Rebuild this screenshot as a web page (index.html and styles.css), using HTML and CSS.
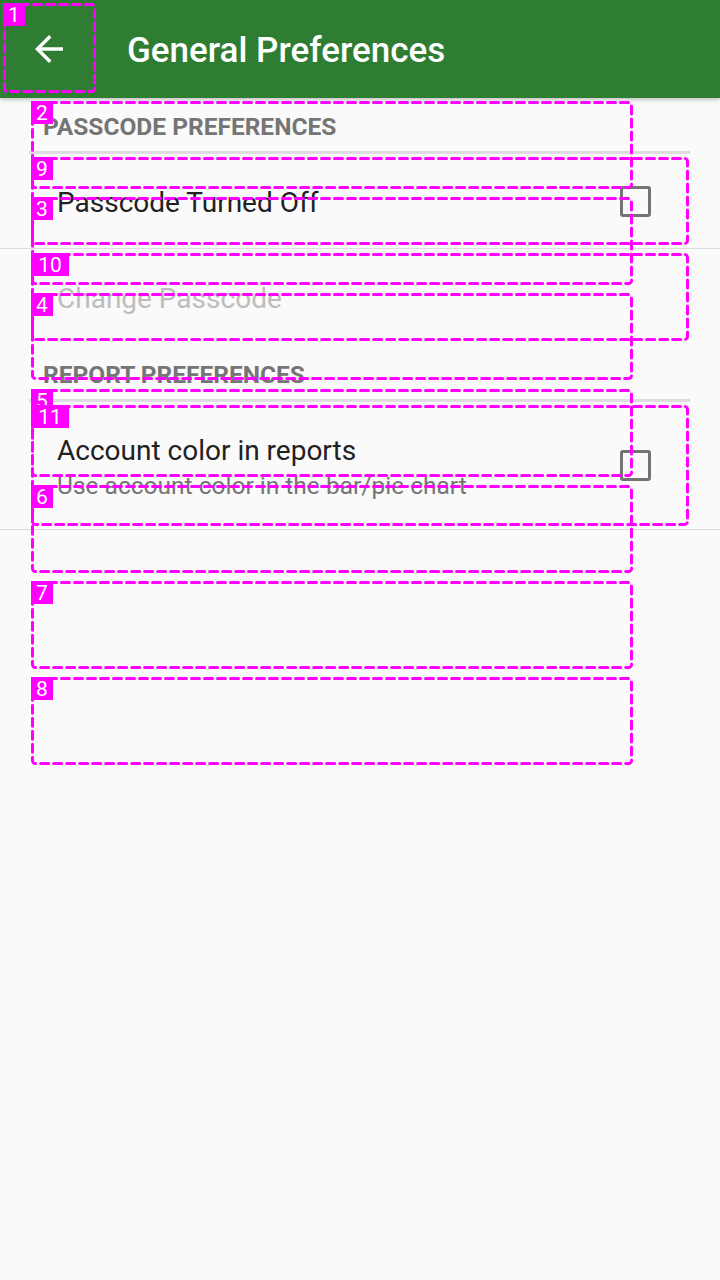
FILE: index.html
```html
<!DOCTYPE html>
<html lang="en">
<head>
<meta charset="utf-8">
<title>General Preferences</title>
<link rel="stylesheet" href="styles.css">
</head>
<body>
<div class="screen">
  <header class="appbar">
    <button class="back" aria-label="Back">
      <svg viewBox="0 0 24 24" width="42" height="42"><path d="M20 11H7.83l5.59-5.59L12 4l-8 8 8 8 1.41-1.41L7.83 13H20v-2z" fill="#ffffff"/></svg>
    </button>
    <h1 class="title">General Preferences</h1>
  </header>

  <main class="prefs">
    <section class="category first">
      <h2 class="cat-title">PASSCODE PREFERENCES</h2>
    </section>
    <div class="row bordered">
      <div class="texts"><div class="pref-title">Passcode Turned Off</div></div>
      <span class="checkbox"></span>
    </div>
    <div class="row">
      <div class="texts"><div class="pref-title disabled">Change Passcode</div></div>
    </div>

    <section class="category second">
      <h2 class="cat-title">REPORT PREFERENCES</h2>
    </section>
    <div class="row tall bordered">
      <div class="texts">
        <div class="pref-title">Account color in reports</div>
        <div class="pref-summary">Use account color in the bar/pie chart</div>
      </div>
      <span class="checkbox"></span>
    </div>
  </main>

  <svg class="overlay" width="720" height="1280" viewBox="0 0 720 1280">
    <g class="boxes">
      <rect x="4.5" y="4.5" width="90" height="87" rx="3"/>
      <rect x="32.5" y="102.5" width="599" height="85" rx="3"/>
      <rect x="32.5" y="198.5" width="599" height="85" rx="3"/>
      <rect x="32.5" y="294.5" width="599" height="84" rx="3"/>
      <rect x="32.5" y="390.5" width="599" height="85" rx="3"/>
      <rect x="32.5" y="486.5" width="599" height="85" rx="3"/>
      <rect x="32.5" y="582.5" width="599" height="85" rx="3"/>
      <rect x="32.5" y="678.5" width="599" height="85" rx="3"/>
      <rect x="32.5" y="158.5" width="655" height="85" rx="3"/>
      <rect x="32.5" y="254.5" width="655" height="85" rx="3"/>
      <rect x="32.5" y="406.5" width="655" height="118" rx="3"/>
    </g>
    <g class="tags">
      <rect x="3" y="3" width="22" height="23"/><text x="14" y="22">1</text>
      <rect x="31" y="101" width="22" height="23"/><text x="42" y="120">2</text>
      <rect x="31" y="197" width="22" height="23"/><text x="42" y="216">3</text>
      <rect x="31" y="293" width="22" height="23"/><text x="42" y="312">4</text>
      <rect x="31" y="389" width="22" height="23"/><text x="42" y="408">5</text>
      <rect x="31" y="485" width="22" height="23"/><text x="42" y="504">6</text>
      <rect x="31" y="581" width="22" height="23"/><text x="42" y="600">7</text>
      <rect x="31" y="677" width="22" height="23"/><text x="42" y="696">8</text>
      <rect x="31" y="157" width="22" height="23"/><text x="42" y="176">9</text>
      <rect x="31" y="253" width="38" height="23"/><text x="50" y="272">10</text>
      <rect x="31" y="405" width="38" height="23"/><text x="50" y="424">11</text>
    </g>
  </svg>
</div>
</body>
</html>
```

FILE: styles.css
```css
* {
  box-sizing: border-box;
}

html, body {
  margin: 0;
  padding: 0;
  background: #fafafa;
}

body {
  font-family: Roboto, "Noto Sans", "Liberation Sans", sans-serif;
}

.screen {
  position: relative;
  width: 720px;
  min-height: 1280px;
  background: #fafafa;
  overflow: hidden;
}

.appbar {
  position: relative;
  z-index: 1;
  height: 98px;
  background: #2e7d32;
  display: flex;
  align-items: center;
  box-shadow: 0 2px 4px rgba(0, 0, 0, 0.22);
}

.back {
  width: 42px;
  height: 42px;
  margin-left: 28px;
  padding: 0;
  border: 0;
  background: transparent;
  display: flex;
}

.title {
  margin: 4px 0 0 57px;
  color: #ffffff;
  font-size: 35px;
  font-weight: 500;
  line-height: 40px;
  letter-spacing: 0;
}

.prefs {
  display: flex;
  flex-direction: column;
}

.category {
  margin: 0 30px 0 29px;
  padding: 15px 0 10px 14px;
  border-bottom: 3px solid #dddddd;
}

.category.second {
  padding-top: 17px;
}

.cat-title {
  margin: 0;
  font-size: 24.5px;
  font-weight: 700;
  line-height: 28px;
  color: #757575;
}

.row {
  display: flex;
  align-items: center;
  min-height: 95px;
  padding: 0 69px 0 57px;
}

.row.tall {
  min-height: 128px;
}

.row.bordered {
  border-bottom: 1px solid #dcdcdc;
}

.texts {
  flex: 1;
  display: flex;
  flex-direction: column;
  padding-top: 3px;
}

.pref-title {
  font-size: 28px;
  line-height: 33px;
  color: #212121;
}

.pref-title.disabled {
  color: #bdbdbd;
}

.pref-summary {
  margin-top: 5px;
  font-size: 24.5px;
  line-height: 28px;
  color: #757575;
}

.checkbox {
  width: 31px;
  height: 31px;
  border: 3px solid #737373;
  border-radius: 3px;
  flex: none;
}

.overlay {
  position: absolute;
  left: 0;
  top: 0;
  z-index: 2;
  pointer-events: none;
}

.boxes rect {
  fill: none;
  stroke: #ff00ff;
  stroke-width: 3;
  stroke-dasharray: 8 5;
  stroke-linecap: round;
}

.tags rect {
  fill: #ff00ff;
}

.tags text {
  fill: #ffffff;
  font-family: Roboto, "Liberation Sans", sans-serif;
  font-size: 21px;
  text-anchor: middle;
}
```
